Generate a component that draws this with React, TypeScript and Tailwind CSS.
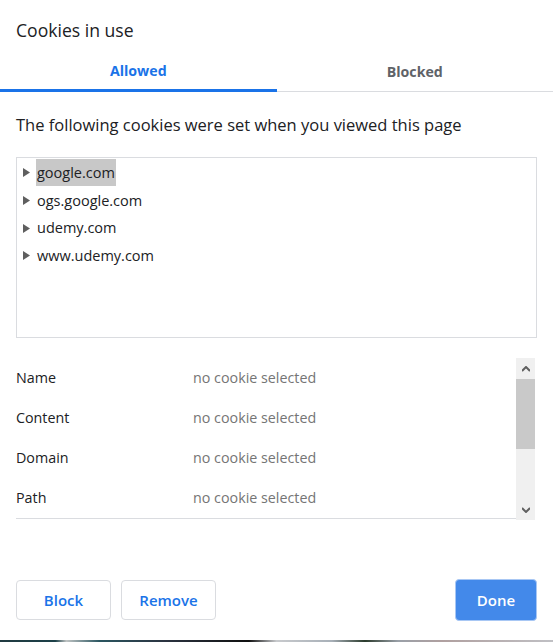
import React from "react";

const font = { fontFamily: '"Segoe UI", "Open Sans", "Noto Sans", sans-serif' };

function Triangle() {
  return (
    <svg width="7" height="9" viewBox="0 0 7 9" className="shrink-0">
      <path d="M0 0 L7 4.5 L0 9 Z" fill="#5f5f5f" />
    </svg>
  );
}

export default function App() {
  const sites = ["google.com", "ogs.google.com", "udemy.com", "www.udemy.com"];
  const rows = ["Name", "Content", "Domain", "Path"];
  return (
    <div className="w-[553px] h-[642px] bg-white flex flex-col text-[#202124] overflow-hidden" style={font}>
      <div className="h-[50px] pl-4 flex items-center pt-[11px] text-[17.6px]">Cookies in use</div>
      <div className="flex h-[42px] border-b border-[#dadce0]">
        <div className="w-1/2 flex items-center justify-center text-[14.2px] font-bold text-[#1a73e8] border-b-[3px] border-[#1a73e8] -mb-px pt-[2px]">
          Allowed
        </div>
        <div className="w-1/2 flex items-center justify-center text-[14.2px] font-bold text-[#5f6368] pt-[2px]">
          Blocked
        </div>
      </div>
      <div className="h-[65px] pl-4 flex items-center pt-[2px] text-[16.5px]">
        The following cookies were set when you viewed this page
      </div>
      <div className="mx-4 h-[181px] border border-[#dadce0] pt-[1px] flex flex-col">
        {sites.map((s, i) => (
          <div key={s} className="h-[27.7px] flex items-center pl-[6px] gap-[6px] text-[14.5px]">
            <Triangle />
            <span className={i === 0 ? "bg-[#c8c8c8] px-[1px] h-[27px] flex items-center" : "px-[1px]"}>{s}</span>
          </div>
        ))}
      </div>
      <div className="ml-4 mr-[18px] mt-[20px] h-[162px] flex">
        <div className="flex-1 flex flex-col">
          {rows.map((r) => (
            <div key={r} className="h-[40px] flex items-center text-[14.3px] shrink-0">
              <div className="w-[177px]">{r}</div>
              <div className="text-[#757575]">no cookie selected</div>
            </div>
          ))}
          <div className="border-t border-[#dadce0]" />
        </div>
        <div className="w-[19px] h-[162px] bg-[#f0f0f0] flex flex-col">
          <div className="h-[21px] flex items-center justify-center">
            <svg width="8" height="6" viewBox="0 0 8 6">
              <path d="M0 5 L4 1 L8 5" stroke="#606060" strokeWidth="2" fill="none" />
            </svg>
          </div>
          <div className="h-[70px] bg-[#c9c9c9]" />
          <div className="flex-1" />
          <div className="h-[21px] flex items-center justify-center">
            <svg width="8" height="6" viewBox="0 0 8 6">
              <path d="M0 1 L4 5 L8 1" stroke="#606060" strokeWidth="2" fill="none" />
            </svg>
          </div>
        </div>
      </div>
      <div className="flex-1" />
      <div className="flex items-center px-4 pb-[19px]">
        <button className="w-[95px] h-[40px] border border-[#dadce0] rounded-[4px] text-[15px] font-semibold text-[#1a73e8]">Block</button>
        <button className="ml-[10px] w-[95px] h-[40px] border border-[#dadce0] rounded-[4px] text-[15px] font-semibold text-[#1a73e8]">Remove</button>
        <div className="flex-1" />
        <button className="w-[82px] h-[42px] rounded-[4px] text-[15px] font-semibold text-white bg-[#4389ea] border border-[#a8c7f4]">Done</button>
      </div>
      <div className="h-[2px] shrink-0" style={{ background: "linear-gradient(90deg,#203a40 0%,#1c4048 10%,#bfc3c3 12%,#2a5560 18%,#2b3340 30%,#101010 45%,#c8cacd 50%,#a8b0b8 60%,#2a3a2c 66%,#9aa0a8 72%,#b0a0a0 80%,#c0c0c4 100%)" }} />
    </div>
  );
}
